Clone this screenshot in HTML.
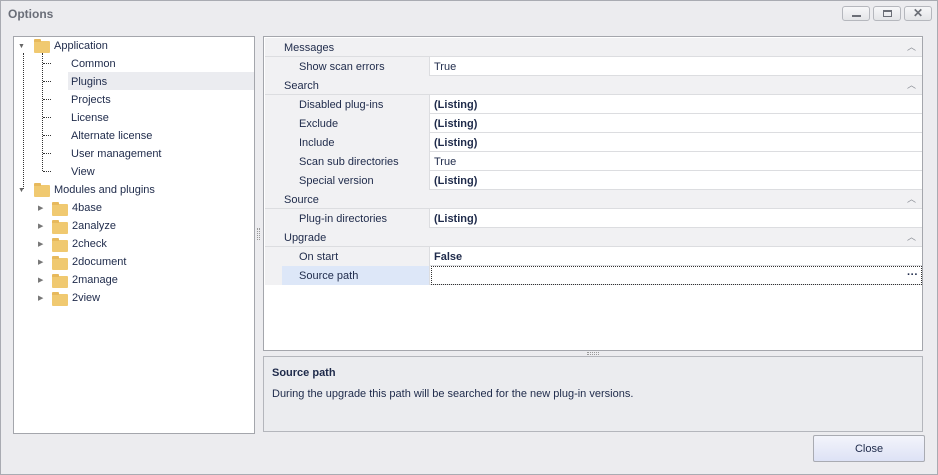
<!DOCTYPE html>
<html><head><style>
*{margin:0;padding:0;box-sizing:border-box}
body{width:938px;height:475px;background:#eeeef1;font-family:"Liberation Sans",sans-serif;font-size:11px;color:#1e2a4a;position:relative;overflow:hidden}
.a{position:absolute}
.win{left:0;top:0;width:938px;height:475px;border:1px solid #a9abb2;background:#ececef}
.title{left:8px;top:7px;font-weight:bold;font-size:12px;color:#6a6e78}
.tb{top:6px;width:28px;height:15px;border:1px solid #b5b7bd;border-radius:3px;background:linear-gradient(#f7f7f9,#e4e5e8)}
.tree{left:13px;top:36px;width:242px;height:398px;background:#fff;border:1px solid #a4a6ac}
.ti{position:absolute;font-size:11px;color:#1e2a4a}
.fold{position:absolute;width:16px;height:12px;background:#f0c970;border-radius:1px}
.fold:before{content:"";position:absolute;left:0;top:-2px;width:7px;height:3px;background:#e7b95c;border-radius:1px 1px 0 0}
.grid{left:263px;top:36px;width:660px;height:315px;background:#fff;border:1px solid #a4a6ac}
.cat{position:absolute;left:1px;width:657px;height:19px;background:#f1f1f3;border-bottom:1px solid #dcdde0}
.cat span{position:absolute;left:19px;top:4px}
.row{position:absolute;left:1px;width:657px;height:19px;border-bottom:1px solid #dcdde0}
.row .m{position:absolute;left:0;top:0;width:17px;height:19px;background:#f1f1f3}
.row .n{position:absolute;left:17px;top:0;width:148px;height:19px;background:#f1f1f3;border-right:1px solid #dcdde0;padding:4px 0 0 17px}
.row .v{position:absolute;left:166px;top:4px;padding-left:3px}
.b{font-weight:bold}
.car{position:absolute;right:6px;top:2px;font-size:9px;color:#8a8d95}
.desc{left:263px;top:356px;width:660px;height:76px;border:1px solid #b4b6bc;background:#ebecef}
.btn{left:813px;top:435px;width:112px;height:27px;border:1px solid #a9abb2;border-radius:2px;background:linear-gradient(#f3f4fb,#dde2f5);text-align:center;line-height:26px;font-size:11px}
.h{position:absolute;width:8px;border-top:1px dotted #333}
</style></head><body>
<div class="a win"></div>
<div class="a title">Options</div>
<div class="a tb" style="left:842px"><div class="a" style="left:9px;top:8px;width:9px;height:2px;background:#6b6e76"></div></div>
<div class="a tb" style="left:873px"><div class="a" style="left:9px;top:3px;width:9px;height:7px;border:2px solid #6b6e76;border-width:2px 1px 1px 1px"></div></div>
<div class="a tb" style="left:904px;font-size:12px;font-weight:bold;color:#6b6e76;text-align:center;line-height:13px">✕</div>

<div class="a tree">
 <div class="a" style="left:9px;top:16px;height:136px;border-left:1px dotted #333"></div>
 <div class="a" style="left:28px;top:16px;height:118px;border-left:1px dotted #333"></div>
 <div class="a" style="left:54px;top:35px;width:186px;height:18px;background:#ebecf0"></div>
 <div class="a" style="left:4px;top:6px;font-size:7px;color:#666">▼</div>
 <div class="fold" style="left:20px;top:4px"></div>
 <div class="ti" style="left:40px;top:3px">Application</div>
 <div class="ti" style="left:57px;top:21px">Common</div>
 <div class="ti" style="left:57px;top:39px">Plugins</div>
 <div class="ti" style="left:57px;top:57px">Projects</div>
 <div class="ti" style="left:57px;top:75px">License</div>
 <div class="ti" style="left:57px;top:93px">Alternate license</div>
 <div class="ti" style="left:57px;top:111px">User management</div>
 <div class="ti" style="left:57px;top:129px">View</div>
 <div class="h" style="left:29px;top:26px"></div>
 <div class="h" style="left:29px;top:44px"></div>
 <div class="h" style="left:29px;top:62px"></div>
 <div class="h" style="left:29px;top:80px"></div>
 <div class="h" style="left:29px;top:98px"></div>
 <div class="h" style="left:29px;top:116px"></div>
 <div class="h" style="left:29px;top:134px"></div>
 <div class="a" style="left:4px;top:150px;font-size:7px;color:#666">▼</div>
 <div class="fold" style="left:20px;top:148px"></div>
 <div class="ti" style="left:40px;top:147px">Modules and plugins</div>
 <div class="a" style="left:28px;top:162px;height:100px;border-left:1px dotted transparent"></div>
 <div class="a" style="left:24px;top:167px;font-size:7px;color:#777">▶</div><div class="fold" style="left:38px;top:167px"></div><div class="ti" style="left:58px;top:165px">4base</div>
 <div class="a" style="left:24px;top:185px;font-size:7px;color:#777">▶</div><div class="fold" style="left:38px;top:185px"></div><div class="ti" style="left:58px;top:183px">2analyze</div>
 <div class="a" style="left:24px;top:203px;font-size:7px;color:#777">▶</div><div class="fold" style="left:38px;top:203px"></div><div class="ti" style="left:58px;top:201px">2check</div>
 <div class="a" style="left:24px;top:221px;font-size:7px;color:#777">▶</div><div class="fold" style="left:38px;top:221px"></div><div class="ti" style="left:58px;top:219px">2document</div>
 <div class="a" style="left:24px;top:239px;font-size:7px;color:#777">▶</div><div class="fold" style="left:38px;top:239px"></div><div class="ti" style="left:58px;top:237px">2manage</div>
 <div class="a" style="left:24px;top:257px;font-size:7px;color:#777">▶</div><div class="fold" style="left:38px;top:257px"></div><div class="ti" style="left:58px;top:255px">2view</div>
</div>
<div class="a" style="left:257px;top:228px;width:3px;height:12px;border-left:1px dotted #999;border-right:1px dotted #999"></div>

<div class="a grid">
 <div class="cat" style="top:1px"><span>Messages</span><div class="car">︿</div></div>
 <div class="row" style="top:20px"><div class="m"></div><div class="n">Show scan errors</div><div class="v">True</div></div>
 <div class="cat" style="top:39px"><span>Search</span><div class="car">︿</div></div>
 <div class="row" style="top:58px"><div class="m"></div><div class="n">Disabled plug-ins</div><div class="v b">(Listing)</div></div>
 <div class="row" style="top:77px"><div class="m"></div><div class="n">Exclude</div><div class="v b">(Listing)</div></div>
 <div class="row" style="top:96px"><div class="m"></div><div class="n">Include</div><div class="v b">(Listing)</div></div>
 <div class="row" style="top:115px"><div class="m"></div><div class="n">Scan sub directories</div><div class="v">True</div></div>
 <div class="row" style="top:134px"><div class="m"></div><div class="n">Special version</div><div class="v b">(Listing)</div></div>
 <div class="cat" style="top:153px"><span>Source</span><div class="car">︿</div></div>
 <div class="row" style="top:172px"><div class="m"></div><div class="n">Plug-in directories</div><div class="v b">(Listing)</div></div>
 <div class="cat" style="top:191px"><span>Upgrade</span><div class="car">︿</div></div>
 <div class="row" style="top:210px"><div class="m"></div><div class="n">On start</div><div class="v b">False</div></div>
 <div class="row" style="top:229px"><div class="m"></div><div class="n" style="background:#dde7f8">Source path</div>
  <div class="a" style="left:166px;top:0;width:491px;height:19px;border:1px dotted #333"></div>
  <div class="a b" style="right:4px;top:3px">···</div></div>
</div>
<div class="a" style="left:587px;top:352px;width:12px;height:3px;border-top:1px dotted #999;border-bottom:1px dotted #999"></div>

<div class="a desc">
 <div class="a b" style="left:8px;top:10px">Source path</div>
 <div class="a" style="left:8px;top:31px">During the upgrade this path will be searched for the new plug-in versions.</div>
</div>
<div class="a btn">Close</div>
</body></html>
